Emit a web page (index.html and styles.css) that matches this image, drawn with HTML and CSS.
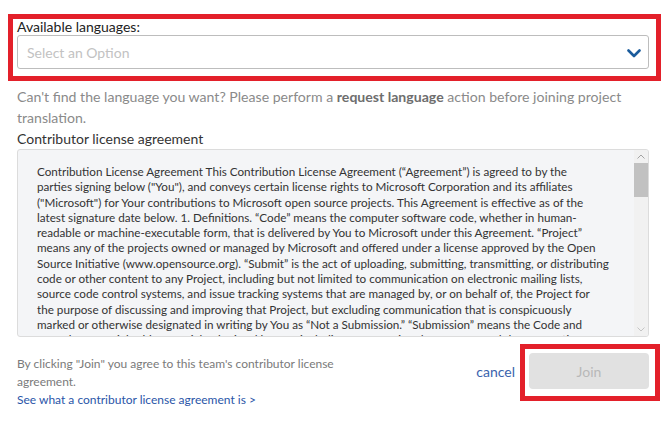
FILE: index.html
```html
<!DOCTYPE html>
<html lang="en">
<head>
<meta charset="utf-8">
<title>Join project</title>
<link rel="stylesheet" href="styles.css">
</head>
<body>
<div class="page">
  <div class="lang-box">
    <label class="field-label">Available languages:</label>
    <div class="select">
      <span class="placeholder">Select an Option</span>
      <svg class="chev" width="14" height="9" viewBox="0 0 14 9"><polyline points="1.5,1.5 7,7 12.5,1.5" fill="none" stroke="#1b5c9c" stroke-width="2.6" stroke-linecap="round" stroke-linejoin="round"/></svg>
    </div>
  </div>
  <p class="help">Can't find the language you want? Please perform a <b>request language</b> action before joining project translation.</p>
  <div class="cla-label">Contributor license agreement</div>
  <div class="cla-box">
    <div class="cla-text">Contribution License Agreement This Contribution License Agreement (“Agreement”) is agreed to by the<br>parties signing below ("You"), and conveys certain license rights to Microsoft Corporation and its affiliates<br>("Microsoft") for Your contributions to Microsoft open source projects. This Agreement is effective as of the<br>latest signature date below. 1. Definitions. “Code” means the computer software code, whether in human-<br>readable or machine-executable form, that is delivered by You to Microsoft under this Agreement. “Project”<br>means any of the projects owned or managed by Microsoft and offered under a license approved by the Open<br>Source Initiative (www.opensource.org). “Submit” is the act of uploading, submitting, transmitting, or distributing<br>code or other content to any Project, including but not limited to communication on electronic mailing lists,<br>source code control systems, and issue tracking systems that are managed by, or on behalf of, the Project for<br>the purpose of discussing and improving that Project, but excluding communication that is conspicuously<br>marked or otherwise designated in writing by You as “Not a Submission.” “Submission” means the Code and<br>any other copyrightable material Submitted by You, including any associated comments and documentation. 2.<br>Your Submission. You must agree to the terms of this Agreement before making a Submission to any Project.</div>
    <div class="scrollbar">
      <div class="sb-btn"><svg width="8" height="5" viewBox="0 0 8 5"><polyline points="0.5,4.5 4,1 7.5,4.5" fill="none" stroke="#a3a3a3" stroke-width="1"/></svg></div>
      <div class="sb-thumb"></div>
      <div class="sb-track"></div>
      <div class="sb-btn"><svg width="8" height="5" viewBox="0 0 8 5"><polyline points="0.5,0.5 4,4 7.5,0.5" fill="none" stroke="#c4c4c4" stroke-width="1"/></svg></div>
    </div>
  </div>
  <div class="footer">
    <div class="consent">
      <p class="consent-text">By clicking "Join" you agree to this team's contributor license agreement.</p>
      <a class="cla-link" href="#">See what a contributor license agreement is &gt;</a>
    </div>
    <div class="actions">
      <a class="cancel" href="#">cancel</a>
      <div class="join-mark">
        <button class="join" disabled>Join</button>
      </div>
    </div>
  </div>
</div>
</body>
</html>
```
FILE: styles.css
```css
* { box-sizing: border-box; }
html, body { margin: 0; padding: 0; background: #fff; }
body {
  font-family: Lato, "Open Sans", sans-serif;
  color: #333;
  width: 668px;
  height: 438px;
  overflow: hidden;
}
.page {
  padding: 14px 19px 0 17px;
}
.lang-box {
  margin: 0 -12px 0 -9px;
  border: 5px solid #e3202a;
  padding: 0 7px 7px 4px;
  display: flex;
  flex-direction: column;
}
.field-label {
  font-size: 14px;
  line-height: 16px;
  color: #222;
  display: block;
}
.select {
  height: 34px;
  border: 1px solid #bdbdbd;
  border-radius: 3px;
  display: flex;
  align-items: center;
  justify-content: space-between;
  padding: 0 7px 0 9px;
  background: #fff;
}
.placeholder {
  font-size: 14px;
  color: #c2c2c2;
}
.chev { display: block; margin-top: 2px; }
.help {
  margin: 5px 0 0;
  font-size: 14.1px;
  line-height: 21px;
  color: #8a8a8a;
}
.help b { color: #6e6e6e; font-weight: 700; }
.cla-label {
  margin-top: 1px;
  font-size: 14px;
  line-height: 20px;
  color: #333;
}
.cla-box {
  height: 188px;
  border: 1px solid #dcdcdc;
  border-radius: 3px;
  background: #f4f5f7;
  display: flex;
  overflow: hidden;
}
.cla-text {
  flex: 1;
  padding: 14px 0 0 19px;
  font-size: 11.7px;
  line-height: 15.3px;
  color: #333;
  white-space: nowrap;
  overflow: hidden;
}
.scrollbar {
  width: 14px;
  display: flex;
  flex-direction: column;
  background: #f1f1f1;
}
.sb-btn {
  height: 13px;
  display: flex;
  align-items: center;
  justify-content: center;
}
.sb-thumb {
  height: 34px;
  background: #c1c1c1;
}
.sb-track { flex: 1; }
.footer {
  margin-top: 7px;
  display: flex;
  justify-content: space-between;
  align-items: flex-start;
}
.consent {
  width: 330px;
  padding-top: 11px;
  font-size: 12px;
  line-height: 18px;
}
.consent-text {
  margin: 0;
  color: #7a7a7a;
}
.cla-link {
  color: #2a55a8;
  text-decoration: none;
}
.actions {
  display: flex;
  align-items: center;
  margin-right: -11px;
}
.cancel {
  font-size: 14px;
  color: #3a63ad;
  text-decoration: none;
  margin-right: 5px;
  margin-top: -3px;
}
.join-mark {
  border: 5px solid #e3202a;
  padding: 4px 6px 7px 4px;
}
.join {
  display: block;
  width: 120px;
  height: 36px;
  border: 0;
  border-radius: 4px;
  background: #e1e1e1;
  color: #b8b8b8;
  font-family: Lato, "Open Sans", sans-serif;
  font-size: 14px;
}
```
